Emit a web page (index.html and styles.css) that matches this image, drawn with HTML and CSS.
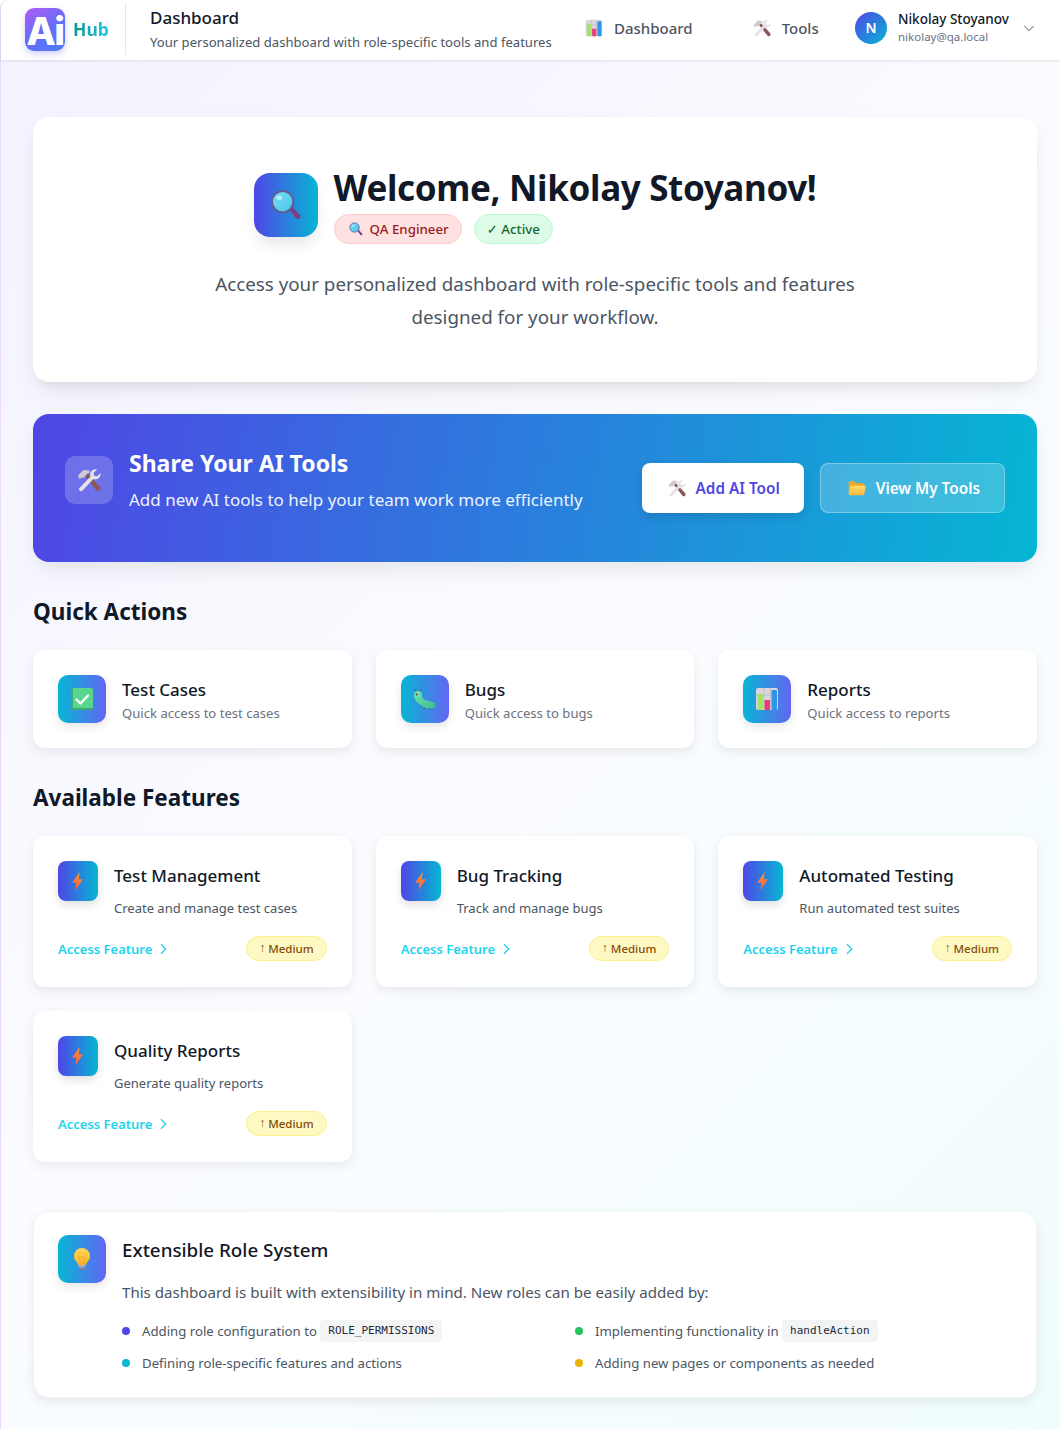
FILE: index.html
```html
<!DOCTYPE html>
<html lang="en">

<head>
    <meta charset="UTF-8">
    <meta name="viewport" content="width=device-width, initial-scale=1.0">
    <title>Dashboard</title>
    <link rel="stylesheet" href="styles.css">
</head>

<body>
    <svg class="sprites" width="0" height="0" aria-hidden="true">
        <defs>
            <linearGradient id="glassLens" x1="0" y1="0" x2="1" y2="1">
                <stop offset="0" stop-color="#7fe0f5" />
                <stop offset="1" stop-color="#45c3e8" />
            </linearGradient>
            <linearGradient id="boltFill" x1="0" y1="0" x2="0" y2="1">
                <stop offset="0" stop-color="#fb923c" />
                <stop offset="1" stop-color="#f9603f" />
            </linearGradient>
            <linearGradient id="bugFill" x1="0" y1="0" x2="1" y2="1">
                <stop offset="0" stop-color="#6ee7b7" />
                <stop offset="1" stop-color="#3fb98a" />
            </linearGradient>
            <linearGradient id="bulbFill" x1="0" y1="0" x2="0" y2="1">
                <stop offset="0" stop-color="#ffd75e" />
                <stop offset="1" stop-color="#fbb324" />
            </linearGradient>
            <linearGradient id="folderFill" x1="0" y1="0" x2="0" y2="1">
                <stop offset="0" stop-color="#ffdc6b" />
                <stop offset="1" stop-color="#fdb73a" />
            </linearGradient>
        </defs>
        <symbol id="i-chart" viewBox="0 0 24 24">
            <rect x="1" y="1" width="22" height="22" rx="2" fill="#d9d6de" />
            <path d="M1 8h22M1 15h22M9 1v22M15.500 1v22" stroke="#bfbac6" stroke-width="0.8" />
            <rect x="2.500" y="7" width="5.500" height="16" rx="1" fill="#a3e36a" />
            <rect x="9.500" y="13" width="5.500" height="10" rx="1" fill="#ec3a78" />
            <rect x="16.500" y="3" width="5.500" height="20" rx="1" fill="#2f96e6" />
        </symbol>
        <symbol id="i-tools" viewBox="0 0 24 24">
            <path d="M8 8l2.500-2.500L23 19a2.500 2.500 0 0 1-3.700 3.300z" fill="#8a5858" />
            <path d="M1 7.500 6.500 2l5.500.5 1.500 2-2.500.5-4.500 5-1.500-.5L2.500 11z" fill="#cfcbd4" />
            <path d="M2 20.500 13.500 8.500c-.8-3 .3-6 3.300-7 1.200-.4 2.500-.4 3.200 0l-3.300 3.200.5 3 3 .5L23.500 5c.4 3.500-1.500 5.800-4 6.300-1.200.2-2.300.1-3-.2L5 23c-1 1-3.900-1.500-3-2.500z" fill="#e4e1e8" />
        </symbol>
        <symbol id="i-search" viewBox="0 0 24 24">
            <path d="M14.500 15.500l2-2.200 6 6.200a2 2 0 0 1-2.900 2.700z" fill="#7d3f80" />
            <circle cx="9.500" cy="9.500" r="8" fill="url(#glassLens)" stroke="#5f5a92" stroke-width="1.400" />
            <ellipse cx="7" cy="6.500" rx="2.200" ry="1.500" fill="#b9eefa" />
        </symbol>
        <symbol id="i-check" viewBox="0 0 24 24">
            <rect x="1" y="1" width="22" height="22" rx="2" fill="#58d68d" />
            <path d="M1 3v18a2 2 0 0 0 2 2h18a2 2 0 0 0 2-2H4a1 1 0 0 1-1-1V1a2 2 0 0 0-2 2z" fill="#3fa971" />
            <path d="M6.500 12.500l4 4 7.500-8" fill="none" stroke="#fff" stroke-width="2.400" stroke-linecap="round" stroke-linejoin="round" />
        </symbol>
        <symbol id="i-bug" viewBox="0 0 24 24">
            <path d="M4 5 2 2M6 5l3-3" stroke="#4a5a58" stroke-width="1" fill="none" />
            <path d="M1 8a4 4 0 0 1 8 0c0 3 2 5 4 5.500 3 .5 5 .5 8 2a3 3 0 0 1 0 5.500c-5 .8-10 .3-13-2.500C5 16 1 13 1 8z" fill="url(#bugFill)" />
            <path d="M9 18.500l-1 1.500M12 20.500l-.5 1.500M16 21.500V23" stroke="#4a5a58" stroke-width=".8" />
            <circle cx="3.500" cy="7.500" r="0.900" fill="#8a2a45" />
        </symbol>
        <symbol id="i-bolt" viewBox="0 0 24 24">
            <path d="M14 1 5 14h5l-1 9 9-13h-5z" fill="url(#boltFill)" />
        </symbol>
        <symbol id="i-bulb" viewBox="0 0 24 24">
            <path d="M12 1a8 8 0 0 0-8 8c0 3 1.500 4.500 3 6.500.6.800.8 1.500.9 2.500h8.200c.1-1 .3-1.700.9-2.500 1.500-2 3-3.500 3-6.500a8 8 0 0 0-8-8z" fill="url(#bulbFill)" />
            <path d="M10 18v-5l-1.500-3M14 18v-5l1.500-3M8.500 10h7" fill="none" stroke="#f0a020" stroke-width=".7" />
            <rect x="8.500" y="18" width="7" height="1.800" rx=".9" fill="#b9b2c4" />
            <rect x="9" y="20" width="6" height="1.600" rx=".8" fill="#9a93a8" />
            <rect x="10" y="21.800" width="4" height="1.400" rx=".7" fill="#7d768c" />
        </symbol>
        <symbol id="i-folder" viewBox="0 0 24 24">
            <path d="M1 5a2 2 0 0 1 2-2h6l2.500 2.500H20a2 2 0 0 1 2 2V20H3a2 2 0 0 1-2-2z" fill="#f5a623" />
            <path d="M5 9h17.500a1 1 0 0 1 1 1.200L21.500 20a2 2 0 0 1-2 1.500H2.500a1.500 1.500 0 0 1-1.500-2l2.200-9.200A1.700 1.700 0 0 1 5 9z" fill="url(#folderFill)" />
        </symbol>
    </svg>

    <div class="page">
        <header class="topbar">
            <div class="brand">
                <div class="logo">Ai</div>
                <span class="brand-name">Hub</span>
            </div>
            <div class="page-title">
                <h1>Dashboard</h1>
                <p>Your personalized dashboard with role-specific tools and features</p>
            </div>
            <nav class="topnav">
                <a class="nav-link nav-dashboard"><svg class="emoji-18"><use href="#i-chart" /></svg>Dashboard</a>
                <a class="nav-link nav-tools"><svg class="emoji-18"><use href="#i-tools" /></svg>Tools</a>
            </nav>
            <div class="user">
                <div class="avatar">N</div>
                <div class="user-text">
                    <div class="user-name">Nikolay Stoyanov</div>
                    <div class="user-mail">nikolay@qa.local</div>
                </div>
                <svg class="user-chevron" viewBox="0 0 24 24"><path d="M5 9l7 7 7-7" /></svg>
            </div>
        </header>

        <main class="content">
            <section class="hero">
                <div class="hero-top">
                    <div class="hero-icon grad-right"><svg class="emoji-32"><use href="#i-search" /></svg></div>
                    <div>
                        <h2 class="hero-title">Welcome, Nikolay Stoyanov!</h2>
                        <div class="hero-badges">
                            <span class="badge badge-role"><svg class="emoji-14"><use href="#i-search" /></svg>QA Engineer</span>
                            <span class="badge badge-active"><span class="tick">✓</span> Active</span>
                        </div>
                    </div>
                </div>
                <p class="hero-text">Access your personalized dashboard with role-specific tools and features designed for your workflow.</p>
            </section>

            <section class="share">
                <div class="share-icon"><svg class="emoji-24"><use href="#i-tools" /></svg></div>
                <div class="share-text">
                    <h3>Share Your AI Tools</h3>
                    <p>Add new AI tools to help your team work more efficiently</p>
                </div>
                <a class="btn btn-white"><svg class="emoji-18"><use href="#i-tools" /></svg>Add AI Tool</a>
                <a class="btn btn-glass"><svg class="emoji-18"><use href="#i-folder" /></svg>View My Tools</a>
            </section>

            <h2 class="section-title">Quick Actions</h2>
            <section class="card-grid">
                <div class="card action-card">
                    <div class="icon-48 grad-left"><svg class="emoji-24"><use href="#i-check" /></svg></div>
                    <div class="action-text">
                        <h4>Test Cases</h4>
                        <p>Quick access to test cases</p>
                    </div>
                </div>
                <div class="card action-card">
                    <div class="icon-48 grad-left"><svg class="emoji-24"><use href="#i-bug" /></svg></div>
                    <div class="action-text">
                        <h4>Bugs</h4>
                        <p>Quick access to bugs</p>
                    </div>
                </div>
                <div class="card action-card">
                    <div class="icon-48 grad-left"><svg class="emoji-24"><use href="#i-chart" /></svg></div>
                    <div class="action-text">
                        <h4>Reports</h4>
                        <p>Quick access to reports</p>
                    </div>
                </div>
            </section>

            <h2 class="section-title section-features">Available Features</h2>
            <section class="card-grid">
                <div class="card feature-card">
                    <div class="feature-top">
                        <div class="icon-40 grad-right"><svg class="emoji-20"><use href="#i-bolt" /></svg></div>
                        <div>
                            <h4>Test Management</h4>
                            <p>Create and manage test cases</p>
                        </div>
                    </div>
                    <div class="feature-foot">
                        <a class="feature-link">Access Feature <svg viewBox="0 0 24 24"><path d="M9 5l7 7-7 7" /></svg></a>
                        <span class="pill"><span class="arrow">↑</span> Medium</span>
                    </div>
                </div>
                <div class="card feature-card">
                    <div class="feature-top">
                        <div class="icon-40 grad-right"><svg class="emoji-20"><use href="#i-bolt" /></svg></div>
                        <div>
                            <h4>Bug Tracking</h4>
                            <p>Track and manage bugs</p>
                        </div>
                    </div>
                    <div class="feature-foot">
                        <a class="feature-link">Access Feature <svg viewBox="0 0 24 24"><path d="M9 5l7 7-7 7" /></svg></a>
                        <span class="pill"><span class="arrow">↑</span> Medium</span>
                    </div>
                </div>
                <div class="card feature-card">
                    <div class="feature-top">
                        <div class="icon-40 grad-right"><svg class="emoji-20"><use href="#i-bolt" /></svg></div>
                        <div>
                            <h4>Automated Testing</h4>
                            <p>Run automated test suites</p>
                        </div>
                    </div>
                    <div class="feature-foot">
                        <a class="feature-link">Access Feature <svg viewBox="0 0 24 24"><path d="M9 5l7 7-7 7" /></svg></a>
                        <span class="pill"><span class="arrow">↑</span> Medium</span>
                    </div>
                </div>
                <div class="card feature-card">
                    <div class="feature-top">
                        <div class="icon-40 grad-right"><svg class="emoji-20"><use href="#i-bolt" /></svg></div>
                        <div>
                            <h4>Quality Reports</h4>
                            <p>Generate quality reports</p>
                        </div>
                    </div>
                    <div class="feature-foot">
                        <a class="feature-link">Access Feature <svg viewBox="0 0 24 24"><path d="M9 5l7 7-7 7" /></svg></a>
                        <span class="pill"><span class="arrow">↑</span> Medium</span>
                    </div>
                </div>
            </section>

            <section class="card info">
                <div class="icon-48 grad-left"><svg class="emoji-24"><use href="#i-bulb" /></svg></div>
                <div class="info-body">
                    <h3>Extensible Role System</h3>
                    <p>This dashboard is built with extensibility in mind. New roles can be easily added by:</p>
                    <ul class="info-list">
                        <li><span class="dot dot-indigo"></span>Adding role configuration to <code>ROLE_PERMISSIONS</code></li>
                        <li><span class="dot dot-green"></span>Implementing functionality in <code>handleAction</code></li>
                        <li><span class="dot dot-cyan"></span>Defining role-specific features and actions</li>
                        <li><span class="dot dot-amber"></span>Adding new pages or components as needed</li>
                    </ul>
                </div>
            </section>
        </main>
    </div>
</body>

</html>
```

FILE: styles.css
```css
* {
    box-sizing: border-box;
}

html,
body {
    margin: 0;
    padding: 0;
}

body {
    font-family: "Noto Sans", Inter, sans-serif;
    color: #111827;
    background: #fff;
}

h1,
h2,
h3,
h4,
p,
ul {
    margin: 0;
    padding: 0;
}

.sprites {
    position: absolute;
}

.page {
    min-height: 1429px;
    border-left: 1px solid #ead9f8;
    border-top-left-radius: 8px;
    background: linear-gradient(135deg, #f3f2ff 0%, #fbfcff 50%, #f1fdfd 100%);
}

/* top bar */
.topbar {
    height: 60px;
    display: flex;
    align-items: center;
    padding: 0 23px 2px 24px;
    background: #fff;
    box-shadow: 0 1px 3px rgba(0, 0, 0, 0.1);
    border-top-left-radius: 8px;
}

.brand {
    width: 101px;
    height: 52px;
    flex: none;
    display: flex;
    align-items: center;
    gap: 8px;
    border-right: 1px solid #e5e7eb;
}

.logo {
    width: 40px;
    height: 43px;
    border-radius: 9px;
    background: linear-gradient(150deg, #b05cf6 0%, #5f6ff8 55%, #4f7bf7 100%);
    box-shadow: 0 3px 6px rgba(79, 70, 229, 0.25);
    color: #fff;
    font-family: Inter, sans-serif;
    font-size: 38px;
    font-weight: 800;
    line-height: 46px;
    text-align: center;
    letter-spacing: -1.500px;
}

.brand-name {
    font-size: 17.500px;
    font-weight: 700;
    background: linear-gradient(90deg, #0d9488, #22c7e6);
    -webkit-background-clip: text;
    background-clip: text;
    color: transparent;
}

.page-title {
    margin-left: 24px;
    width: 435px;
    flex: none;
}

.page-title h1 {
    font-size: 17px;
    font-weight: 500;
    line-height: 24px;
    color: #111827;
}

.page-title p {
    font-size: 13.100px;
    line-height: 20px;
    margin-top: 2px;
    color: #4b5563;
    white-space: nowrap;
}

.topnav {
    display: flex;
    margin-top: -2px;
}

.nav-link {
    display: flex;
    align-items: center;
    gap: 11px;
    font-size: 15px;
    font-weight: 500;
    color: #4b5563;
    white-space: nowrap;
}

.nav-tools {
    margin-left: 60px;
}

.emoji-14 {
    width: 14px;
    height: 14px;
}

.emoji-18 {
    width: 18px;
    height: 18px;
}

.emoji-20 {
    width: 20px;
    height: 20px;
}

.emoji-24 {
    width: 24px;
    height: 24px;
}

.emoji-32 {
    width: 32px;
    height: 32px;
}

.user {
    display: flex;
    align-items: center;
    margin-left: auto;
    margin-top: -2px;
}

.avatar {
    width: 32px;
    height: 32px;
    border-radius: 50%;
    background: linear-gradient(135deg, #4f46e5, #06b6d4);
    color: #fff;
    font-size: 14px;
    font-weight: 600;
    line-height: 32px;
    text-align: center;
}

.user-text {
    width: 111px;
    margin-left: 11px;
    white-space: nowrap;
}

.user-name {
    font-size: 13.500px;
    font-weight: 500;
    line-height: 18px;
}

.user-mail {
    font-size: 11.500px;
    line-height: 18px;
    color: #6b7280;
}

.user-chevron {
    width: 16px;
    height: 16px;
    margin-left: 12px;
    fill: none;
    stroke: #9ca3af;
    stroke-width: 2;
}

/* main column */
.content {
    padding: 57px 23px 31px 32px;
}

.hero {
    height: 265px;
    padding-top: 56px;
    background: #fff;
    border-radius: 16px;
    box-shadow: 0 10px 25px -5px rgba(0, 0, 0, 0.1), 0 8px 10px -6px rgba(0, 0, 0, 0.06);
}

.hero-top {
    display: flex;
    justify-content: center;
    gap: 16px;
}

.hero-icon {
    width: 64px;
    height: 64px;
    border-radius: 16px;
    display: flex;
    align-items: center;
    justify-content: center;
    box-shadow: 0 10px 15px -3px rgba(0, 0, 0, 0.1);
}

.grad-right {
    background: linear-gradient(90deg, #4f46e5, #06b6d4);
}

.grad-left {
    background: linear-gradient(90deg, #06b6d4, #6366f1);
}

.hero-title {
    margin-top: -1px;
    font-size: 35px;
    font-weight: 700;
    line-height: 32px;
    letter-spacing: -0.350px;
}

.hero-badges {
    display: flex;
    gap: 12px;
    margin-top: 10px;
}

.badge {
    height: 30px;
    display: flex;
    align-items: center;
    padding: 0 12px;
    border-radius: 15px;
    font-size: 13.300px;
    font-weight: 500;
    white-space: pre;
}

.badge svg {
    margin-right: 7px;
}

.tick {
    font-family: "DejaVu Sans", sans-serif;
    font-weight: 400;
}

.badge-role {
    padding-left: 14px;
    background: #fee2e2;
    border: 1px solid #fecaca;
    color: #991b1b;
}

.badge-active {
    background: #dcfce7;
    border: 1px solid #bbf7d0;
    color: #166534;
}

.hero-text {
    width: 680px;
    margin: 24px auto 0;
    font-size: 18.800px;
    line-height: 33px;
    color: #4b5563;
    text-align: center;
}

.share {
    height: 148px;
    margin-top: 32px;
    padding: 0 32px;
    display: flex;
    align-items: center;
    border-radius: 16px;
    background: linear-gradient(100deg, #4f46e5 0%, #06b6d4 100%);
    box-shadow: 0 10px 25px -5px rgba(0, 0, 0, 0.1);
    color: #fff;
}

.share-icon {
    width: 48px;
    height: 48px;
    margin-top: -16px;
    border-radius: 10px;
    background: rgba(255, 255, 255, 0.2);
    display: flex;
    align-items: center;
    justify-content: center;
}

.share-text {
    margin-left: 16px;
    flex: 1;
    margin-top: -14px;
}

.share-text h3 {
    font-size: 23px;
    font-weight: 700;
    line-height: 30px;
}

.share-text p {
    margin-top: 8px;
    font-size: 17px;
    line-height: 28px;
    color: #eef2ff;
}

.btn {
    height: 50px;
    display: flex;
    align-items: center;
    gap: 10px;
    border-radius: 8px;
    font-size: 15.300px;
    font-weight: 600;
    white-space: nowrap;
}

.btn-white {
    padding: 0 24px 0 26px;
    background: #fff;
    color: #4f46e5;
    box-shadow: 0 4px 10px rgba(0, 0, 0, 0.12);
}

.btn-glass {
    margin-left: 16px;
    padding: 0 24px 0 27px;
    background: rgba(255, 255, 255, 0.2);
    border: 1px solid rgba(255, 255, 255, 0.3);
    color: #fff;
}

.section-title {
    margin-top: 36px;
    font-size: 22.500px;
    font-weight: 700;
    line-height: 28px;
    margin-bottom: 24px;
}

.section-features {
    margin-top: 36px;
}

.card-grid {
    display: grid;
    grid-template-columns: repeat(3, 1fr);
    gap: 24px;
}

.card {
    background: #fff;
    border-radius: 12px;
    box-shadow: 0 4px 12px rgba(0, 0, 0, 0.08);
}

.action-card {
    height: 98px;
    padding: 0 25px;
    display: flex;
    align-items: center;
    gap: 16px;
}

.action-text {
    padding-top: 3px;
}

.action-card h4 {
    font-size: 17px;
    font-weight: 500;
    line-height: 24px;
}

.action-card p {
    margin-top: 1px;
    font-size: 13.100px;
    line-height: 20px;
    color: #6b7280;
}

.icon-48 {
    width: 48px;
    height: 48px;
    flex: none;
    border-radius: 10px;
    display: flex;
    align-items: center;
    justify-content: center;
    box-shadow: 0 4px 8px rgba(0, 0, 0, 0.1);
}

.icon-40 {
    width: 40px;
    height: 40px;
    flex: none;
    border-radius: 8px;
    display: flex;
    align-items: center;
    justify-content: center;
    box-shadow: 0 4px 8px rgba(0, 0, 0, 0.12);
}

.feature-card {
    height: 151px;
    padding: 25px 25px 0;
}

.feature-top {
    display: flex;
    gap: 16px;
}

.feature-top h4 {
    margin-top: 1px;
    font-size: 17px;
    font-weight: 500;
    line-height: 28px;
}

.feature-top p {
    margin-top: 8px;
    font-size: 13px;
    line-height: 20px;
    color: #4b5563;
}

.feature-foot {
    display: flex;
    align-items: center;
    justify-content: space-between;
    margin-top: 18px;
}

.feature-link {
    display: flex;
    align-items: center;
    gap: 3px;
    font-size: 13px;
    font-weight: 600;
    color: #22d3ee;
}

.feature-link svg {
    width: 16px;
    height: 16px;
    fill: none;
    stroke: #22d3ee;
    stroke-width: 2;
}

.pill {
    height: 25px;
    padding: 0 12px;
    display: flex;
    align-items: center;
    border-radius: 13px;
    background: #fef9c3;
    border: 1px solid #fef08a;
    color: #854d0e;
    font-size: 11.500px;
    font-weight: 500;
    white-space: pre;
}

.arrow {
    font-family: "Liberation Serif", serif;
    font-size: 12px;
}

.info {
    margin-top: 49px;
    height: 187px;
    padding: 23px 24px;
    display: flex;
    gap: 16px;
    border: 1px solid #f3f4f6;
    border-radius: 16px;
}

.info-body {
    flex: 1;
}

.info-body h3 {
    margin-top: 1px;
    font-size: 18.800px;
    font-weight: 500;
    line-height: 28px;
}

.info-body p {
    margin-top: 16px;
    font-size: 15.100px;
    line-height: 24px;
    color: #4b5563;
}

.info-list {
    list-style: none;
    margin-top: 15px;
    display: grid;
    grid-template-columns: repeat(2, 1fr);
    column-gap: 16px;
    row-gap: 8px;
}

.info-list li {
    display: flex;
    align-items: center;
    height: 24px;
    font-size: 13.200px;
    color: #4b5563;
    white-space: pre-wrap;
}

.dot {
    width: 8px;
    height: 8px;
    margin-right: 12px;
    border-radius: 50%;
}

.dot-indigo {
    background: #4f46e5;
}

.dot-green {
    background: #22c55e;
}

.dot-cyan {
    background: #06b6d4;
}

.dot-amber {
    background: #eab308;
}

code {
    padding: 2px 8px;
    border-radius: 4px;
    background: #f3f4f6;
    color: #1f2937;
    font-family: "DejaVu Sans Mono", monospace;
    font-size: 11px;
    line-height: 18px;
}
```
